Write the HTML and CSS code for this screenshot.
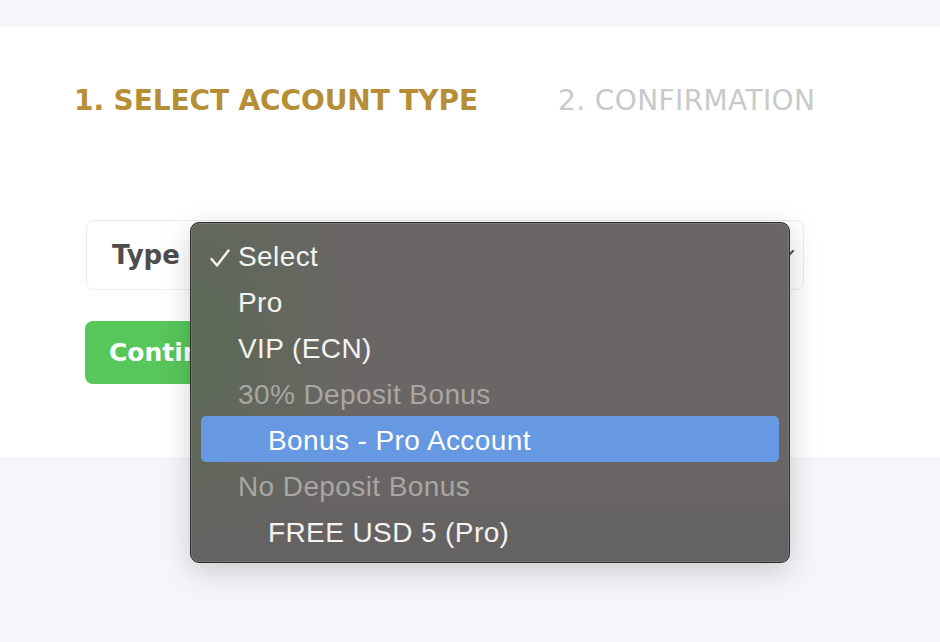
FILE: index.html
```html
<!DOCTYPE html>
<html>
<head>
<meta charset="utf-8">
<link rel="stylesheet" href="styles.css">
</head>
<body>
<div class="topband"></div>
<main class="panel">
  <div class="steps">
    <span class="step active">1. SELECT ACCOUNT TYPE</span>
    <span class="step">2. CONFIRMATION</span>
  </div>
  <div class="field">
    <span class="label">Type</span>
    <svg class="chev" width="18" height="12" viewBox="0 0 18 12"><path d="M2 2 L9 9 L16 2" fill="none" stroke="#555" stroke-width="2.2" stroke-linecap="round" stroke-linejoin="round"/></svg>
  </div>
  <button class="btn">Continue</button>
</main>
<div class="menu">
  <div class="opt"><svg class="check" width="22" height="20" viewBox="0 0 22 20"><path d="M2.5 11 L8 17.5 L19.5 2.5" fill="none" stroke="#f4f4f4" stroke-width="2.4" stroke-linecap="round" stroke-linejoin="round"/></svg>Select</div>
  <div class="opt">Pro</div>
  <div class="opt">VIP (ECN)</div>
  <div class="opt group">30% Deposit Bonus</div>
  <div class="opt sub hl">Bonus - Pro Account</div>
  <div class="opt group">No Deposit Bonus</div>
  <div class="opt sub">FREE USD 5 (Pro)</div>
</div>
</body>
</html>
```
FILE: styles.css
```css
html, body {
  margin: 0;
  padding: 0;
}
body {
  background: #f5f6f9;
  width: 940px;
  height: 642px;
  overflow: hidden;
  position: relative;
  font-family: "DejaVu Sans", sans-serif;
}
.topband {
  height: 27px;
}
.panel {
  background: #ffffff;
  height: 430px;
  box-sizing: border-box;
  padding: 57px 0 0 74px;
}
.steps {
  display: flex;
  gap: 80px;
  align-items: baseline;
  height: 30px;
}
.step {
  font-size: 28px;
  color: #c9c9c9;
  letter-spacing: 0.4px;
}
.step.active {
  color: #b68e35;
  font-weight: 700;
  letter-spacing: -0.1px;
}
.field {
  margin: 106px 0 0 12px;
  width: 718px;
  height: 70px;
  box-sizing: border-box;
  border: 1.5px solid #ececec;
  border-radius: 8px;
  display: flex;
  align-items: center;
  justify-content: space-between;
  padding: 0 8px 0 25px;
}
.label {
  font-weight: 700;
  font-size: 26px;
  color: #4d4d4d;
}
.btn {
  margin: 31px 0 0 11px;
  height: 63px;
  width: 230px;
  border: none;
  border-radius: 8px;
  background: #57c75a;
  color: #fff;
  font-family: "DejaVu Sans", sans-serif;
  font-weight: 700;
  font-size: 25px;
  text-align: left;
  padding: 0 0 0 24px;
}
.menu {
  position: absolute;
  left: 190px;
  top: 222px;
  width: 600px;
  height: 341px;
  box-sizing: border-box;
  background:
    radial-gradient(ellipse 170px 230px at 0 120px, rgba(78, 108, 70, 0.55), rgba(78, 108, 70, 0) 100%),
    linear-gradient(180deg, #6a6665 0%, #6a6665 60%, #646262 100%);
  border: 1px solid #2e2d2c;
  border-radius: 9px;
  box-shadow: inset 0 0 0 1px rgba(255,255,255,0.12), 0 8px 30px rgba(0,0,0,0.18);
  padding: 9px 10px 0 10px;
  font-family: "Liberation Sans", Arial, sans-serif;
  font-size: 28px;
  letter-spacing: 0.4px;
}
.opt {
  height: 46px;
  box-sizing: border-box;
  padding-top: 4px;
  line-height: 42px;
  padding-left: 37px;
  color: #f4f3f2;
  position: relative;
  border-radius: 5px;
}
.opt.sub {
  padding-left: 67px;
}
.opt.group {
  color: #a9a6a4;
}
.opt.hl {
  background: #6798e2;
  color: #fff;
}
.check {
  position: absolute;
  left: 8px;
  top: 16px;
}
```
